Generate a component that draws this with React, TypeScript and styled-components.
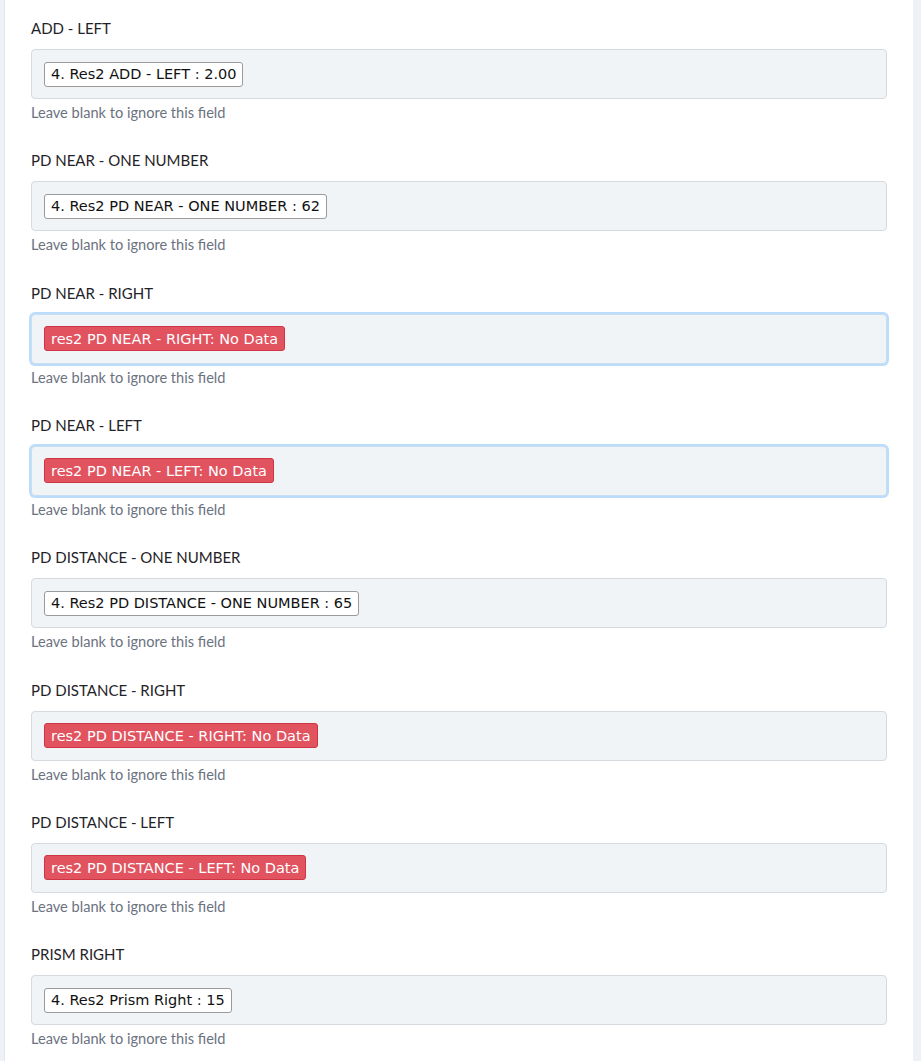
import React from 'react';
import styled, { createGlobalStyle } from 'styled-components';

const GlobalStyle = createGlobalStyle`
  html, body {
    margin: 0;
    padding: 0;
    background: #eef1f5;
  }
`;

const Page = styled.div`
  display: flex;
  padding: 0 8px 0 4px;
  min-height: 1061px;
  overflow: hidden;
`;

const Card = styled.div`
  flex: 1;
  background: #ffffff;
  border-left: 1px solid #e3e7ec;
  padding: 18px 26px 0 26px;
`;

const Field = styled.div`
  margin-bottom: 27.33px;
`;

const Label = styled.div`
  font-family: Lato, "Open Sans", sans-serif;
  font-size: 15px;
  line-height: 20px;
  color: #1f2328;
  margin-bottom: 11px;
`;

const Box = styled.div<{ $focused?: boolean }>`
  box-sizing: border-box;
  height: 50px;
  display: flex;
  align-items: center;
  padding: 0 12px;
  background: #f0f4f7;
  border: 1px solid ${(p) => (p.$focused ? '#c8def3' : '#d5dadf')};
  border-radius: 4px;
  box-shadow: ${(p) => (p.$focused ? '0 0 0 2px #bcdcfb' : 'none')};
`;

const Chip = styled.span<{ $error?: boolean }>`
  box-sizing: border-box;
  height: 25px;
  display: inline-flex;
  align-items: center;
  padding: 0 6px;
  font-family: "DejaVu Sans", Verdana, sans-serif;
  font-size: 14.5px;
  border-radius: 3px;
  background: ${(p) => (p.$error ? '#e0535f' : '#ffffff')};
  color: ${(p) => (p.$error ? '#ffffff' : '#111111')};
  border: 1px solid ${(p) => (p.$error ? '#cf3444' : '#9a9a9a')};
`;

const Help = styled.div`
  font-family: Lato, "Open Sans", sans-serif;
  font-size: 14.6px;
  line-height: 20px;
  color: #6b7280;
  margin-top: 4px;
`;

type FieldData = {
  label: string;
  value: string;
  error?: boolean;
  focused?: boolean;
};

const fields: FieldData[] = [
  { label: 'ADD - LEFT', value: '4. Res2 ADD - LEFT : 2.00' },
  { label: 'PD NEAR - ONE NUMBER', value: '4. Res2 PD NEAR - ONE NUMBER : 62' },
  { label: 'PD NEAR - RIGHT', value: 'res2 PD NEAR - RIGHT: No Data', error: true, focused: true },
  { label: 'PD NEAR - LEFT', value: 'res2 PD NEAR - LEFT: No Data', error: true, focused: true },
  { label: 'PD DISTANCE - ONE NUMBER', value: '4. Res2 PD DISTANCE - ONE NUMBER : 65' },
  { label: 'PD DISTANCE - RIGHT', value: 'res2 PD DISTANCE - RIGHT: No Data', error: true },
  { label: 'PD DISTANCE - LEFT', value: 'res2 PD DISTANCE - LEFT: No Data', error: true },
  { label: 'PRISM RIGHT', value: '4. Res2 Prism Right : 15' },
];

const App: React.FC = () => {
  return (
    <>
      <GlobalStyle />
      <Page>
        <Card>
          {fields.map((f) => (
            <Field key={f.label}>
              <Label>{f.label}</Label>
              <Box $focused={f.focused}>
                <Chip $error={f.error}>{f.value}</Chip>
              </Box>
              <Help>Leave blank to ignore this field</Help>
            </Field>
          ))}
        </Card>
      </Page>
    </>
  );
};

export default App;
